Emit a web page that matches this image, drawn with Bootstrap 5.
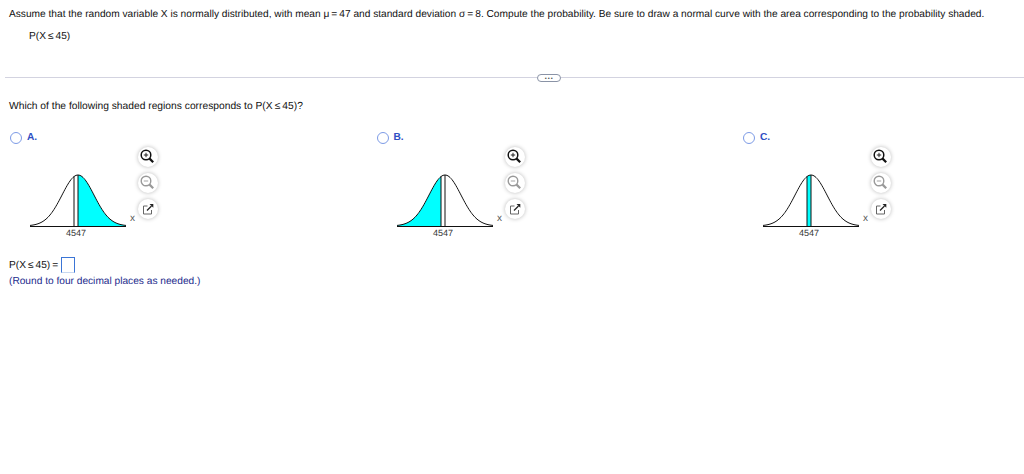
<!DOCTYPE html>
<html lang="en">
<head>
<meta charset="utf-8">
<meta name="viewport" content="width=device-width, initial-scale=1.0">
<title>Normal probability</title>
<link href="https://cdn.jsdelivr.net/npm/bootstrap@5.3.1/dist/css/bootstrap.min.css" rel="stylesheet">
<script src="https://cdn.jsdelivr.net/npm/bootstrap@5.3.1/dist/js/bootstrap.bundle.min.js"></script>
<style>
body {background:#fff;color:#111;font-family:"Liberation Sans",Arial,sans-serif;font-size:10.17px;line-height:12px;text-rendering:geometricPrecision;}
.qtext {padding:9px 0 0 9px;white-space:nowrap;}
.qexpr {padding:10px 0 0 29px;}
.splitter {margin:30px 0 0 5px;height:9px;}
.splitter i {display:block;height:1px;background:#d3d3e0;}
.line-left {width:532px;}
.pill {width:24px;height:8px;border:1px solid #8a93a6;border-radius:4px;font-size:9px;font-weight:700;line-height:3px;text-align:center;color:#555;letter-spacing:.5px;}
.ask {padding:19px 0 0 9px;font-size:10.27px;}
.opts {margin-top:19px;padding-left:10px;}
.opt {width:366.5px;}
.opt:last-child {width:auto;}
.opt-head {height:12px;}
.dot {width:12px;height:12px;border:1.3px solid #7d9be6;border-radius:50%;}
.opt-letter {color:#2f4fc4;font-weight:700;margin-left:5px;}
.plot {margin:30px 0 0 8px;}
.plot svg {display:block;}
.plot text {font-family:"Liberation Sans",Arial,sans-serif;font-size:9px;fill:#333;}
.plot text.axis {font-size:10px;fill:#555;}
.tools {margin:3px 0 0 0;gap:6px;}
.tool {width:20px;height:20px;border-radius:50%;background:#fff;box-shadow:0 0 4px rgba(0,0,0,.28);}
.answer {margin:17px 0 0 9px;}
.anstext {padding-top:2px;}
.ansbox {width:14px;height:16px;border:1px solid #3b75d6;border-bottom-color:#c8d8f0;margin-left:1px;}
.hint {color:#1c2a8c;padding:3px 0 0 9px;}
</style>
</head>
<body>

<div class="qtext">Assume that the random variable X is normally distributed, with mean &mu;&#8201;=&#8201;47 and standard deviation &sigma;&#8201;=&#8201;8. Compute the probability. Be sure to draw a normal curve with the area corresponding to the probability shaded.</div>
<div class="qexpr">P(X&#8201;&le;&#8201;45)</div>

<div class="splitter d-flex align-items-center">
  <i class="line-left flex-shrink-0"></i>
  <div class="pill flex-shrink-0">...</div>
  <i class="flex-grow-1"></i>
</div>

<div class="ask">Which of the following shaded regions corresponds to P(X&#8201;&le;&#8201;45)?</div>

<div class="opts d-flex">
  <div class="opt flex-shrink-0">
    <div class="opt-head d-flex align-items-center"><span class="dot"></span><span class="opt-letter">A.</span></div>
    <div class="d-flex">
      <div class="plot"><svg width="120" height="66" data-from="47" data-to="71"></svg></div>
      <div class="tools d-flex flex-column">
        <div class="tool"><svg width="20" height="20" viewBox="0 0 20 20"><circle cx="8" cy="8" r="4.8" fill="none" stroke="#111" stroke-width="1.5"/><path d="M11.6 11.6l3.6 3.6" stroke="#111" stroke-width="2.2"/><path d="M5.8 8h4.4M8 5.8v4.4" stroke="#111" stroke-width=".9"/></svg></div>
        <div class="tool"><svg width="20" height="20" viewBox="0 0 20 20"><circle cx="8" cy="8" r="4.8" fill="none" stroke="#999" stroke-width="1.4"/><path d="M11.6 11.6l3.6 3.6" stroke="#999" stroke-width="2.2"/><path d="M5.8 8h4.4" stroke="#999" stroke-width=".9"/></svg></div>
        <div class="tool"><svg width="20" height="20" viewBox="0 0 20 20"><path d="M9.5 7H5.5v8h8v-4" fill="none" stroke="#666" stroke-width="1"/><path d="M9 11.5l4.5-4.5" stroke="#222" stroke-width="1.2"/><path d="M11.5 5h3.8v3.8z" fill="#222"/></svg></div>
      </div>
    </div>
  </div>
  <div class="opt flex-shrink-0">
    <div class="opt-head d-flex align-items-center"><span class="dot"></span><span class="opt-letter">B.</span></div>
    <div class="d-flex">
      <div class="plot"><svg width="120" height="66" data-from="23" data-to="45"></svg></div>
      <div class="tools d-flex flex-column">
        <div class="tool"><svg width="20" height="20" viewBox="0 0 20 20"><circle cx="8" cy="8" r="4.8" fill="none" stroke="#111" stroke-width="1.5"/><path d="M11.6 11.6l3.6 3.6" stroke="#111" stroke-width="2.2"/><path d="M5.8 8h4.4M8 5.8v4.4" stroke="#111" stroke-width=".9"/></svg></div>
        <div class="tool"><svg width="20" height="20" viewBox="0 0 20 20"><circle cx="8" cy="8" r="4.8" fill="none" stroke="#999" stroke-width="1.4"/><path d="M11.6 11.6l3.6 3.6" stroke="#999" stroke-width="2.2"/><path d="M5.8 8h4.4" stroke="#999" stroke-width=".9"/></svg></div>
        <div class="tool"><svg width="20" height="20" viewBox="0 0 20 20"><path d="M9.5 7H5.5v8h8v-4" fill="none" stroke="#666" stroke-width="1"/><path d="M9 11.5l4.5-4.5" stroke="#222" stroke-width="1.2"/><path d="M11.5 5h3.8v3.8z" fill="#222"/></svg></div>
      </div>
    </div>
  </div>
  <div class="opt flex-grow-1">
    <div class="opt-head d-flex align-items-center"><span class="dot"></span><span class="opt-letter">C.</span></div>
    <div class="d-flex">
      <div class="plot"><svg width="120" height="66" data-from="45" data-to="47"></svg></div>
      <div class="tools d-flex flex-column">
        <div class="tool"><svg width="20" height="20" viewBox="0 0 20 20"><circle cx="8" cy="8" r="4.8" fill="none" stroke="#111" stroke-width="1.5"/><path d="M11.6 11.6l3.6 3.6" stroke="#111" stroke-width="2.2"/><path d="M5.8 8h4.4M8 5.8v4.4" stroke="#111" stroke-width=".9"/></svg></div>
        <div class="tool"><svg width="20" height="20" viewBox="0 0 20 20"><circle cx="8" cy="8" r="4.8" fill="none" stroke="#999" stroke-width="1.4"/><path d="M11.6 11.6l3.6 3.6" stroke="#999" stroke-width="2.2"/><path d="M5.8 8h4.4" stroke="#999" stroke-width=".9"/></svg></div>
        <div class="tool"><svg width="20" height="20" viewBox="0 0 20 20"><path d="M9.5 7H5.5v8h8v-4" fill="none" stroke="#666" stroke-width="1"/><path d="M9 11.5l4.5-4.5" stroke="#222" stroke-width="1.2"/><path d="M11.5 5h3.8v3.8z" fill="#222"/></svg></div>
      </div>
    </div>
  </div>
</div>

<div class="answer d-flex align-items-center"><span class="anstext">P(X&#8201;&le;&#8201;45)&#8201;=&#8201;</span><span class="ansbox d-inline-block"></span></div>
<div class="hint">(Round to four decimal places as needed.)</div>

<script>
// curve is drawn from mean 47, sd 8, at 2px per unit
var NS = "http://www.w3.org/2000/svg";
function px(v) {return 12 + (v - 23) * 2;}
function py(v) {return 52 - 51 * Math.exp(-Math.pow((v - 47) / 8, 2) / 2);}
function add(svg, tag, attrs, txt) {
  var el = document.createElementNS(NS, tag);
  for (var k in attrs) {el.setAttribute(k, attrs[k]);}
  if (txt) {el.textContent = txt;}
  svg.appendChild(el);
}
function curve(a, b) {
  var d = "";
  for (var v = a; v <= b + 0.001; v += 0.5) {d += (d ? "L" : "M") + px(v) + " " + py(v).toFixed(2);}
  return d;
}
document.querySelectorAll(".plot svg").forEach(function (svg) {
  var a = +svg.dataset.from, b = +svg.dataset.to;
  add(svg, "path", {d: curve(a, b) + "L" + px(b) + " 52L" + px(a) + " 52Z", fill: "#00ffff"});
  add(svg, "path", {d: curve(23, 71), fill: "none", stroke: "#111", "stroke-width": 1});
  add(svg, "path", {d: "M12 52.5H108", stroke: "#111", "stroke-width": 1});
  add(svg, "path", {d: "M" + px(45) + " 52V" + py(45).toFixed(1), stroke: "#111", "stroke-width": 1});
  add(svg, "path", {d: "M" + px(47) + " 52V" + py(47).toFixed(1), stroke: "#111", "stroke-width": 1});
  add(svg, "text", {x: px(46), y: 62, "text-anchor": "middle"}, "4547");
  add(svg, "text", {x: 112, y: 46.5, "class": "axis"}, "x");
});
</script>
</body>
</html>
